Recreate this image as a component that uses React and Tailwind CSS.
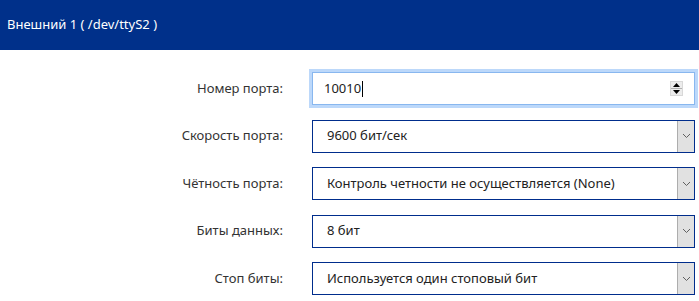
import React from 'react';

const rows = [
  { label: 'Скорость порта:', value: '9600 бит/сек' },
  { label: 'Чётность порта:', value: 'Контроль четности не осуществляется (None)' },
  { label: 'Биты данных:', value: '8 бит' },
  { label: 'Стоп биты:', value: 'Используется один стоповый бит' },
];

function Chevron() {
  return (
    <div className="w-[17px] h-full bg-[#e1e1e1] border-l border-[#adadad] flex items-center justify-center">
      <svg width="9" height="6" viewBox="0 0 9 6">
        <path d="M1 1 L4.5 4.5 L8 1" fill="none" stroke="#606060" strokeWidth="1" />
      </svg>
    </div>
  );
}

function SelectBox({ value }) {
  return (
    <div className="w-[383px] h-[33px] border border-[#002d8c] bg-white flex items-stretch">
      <div className="flex-1 pl-[14px] flex items-center text-[13px] text-[#222]">{value}</div>
      <Chevron />
    </div>
  );
}

function Row({ label, children }) {
  return (
    <div className="flex items-center">
      <div className="w-[283px] text-right text-[13px] text-[#333] pr-0">{label}</div>
      <div className="ml-[29px]">{children}</div>
    </div>
  );
}

export default function App() {
  return (
    <div className="w-[699px] h-[301px] bg-white overflow-hidden" style={{ fontFamily: '"Noto Sans", "Open Sans", sans-serif' }}>
      <div className="h-[50px] bg-[#00308a] flex items-center px-[7px] text-white text-[13px]">
        Внешний 1 ( /dev/ttyS2 )
      </div>

      <div className="pt-[22px] flex flex-col gap-[14.5px]">
        <Row label="Номер порта:">
          <div className="w-[383px] h-[33px] border border-[#88b7ef] bg-white flex items-center outline outline-[3px] outline-[#bcd8fa]">
            <div className="flex-1 pl-[11px] flex items-center text-[13px] text-[#222]">
              10010<span className="w-px h-[16px] bg-black ml-px" />
            </div>
            <div className="mr-[11px] w-[13px] h-[15px] bg-[#ececec] border border-[#d8d8d8] flex flex-col">
              <div className="flex-1 flex items-center justify-center border-b border-[#b0b0b0]">
                <svg width="7" height="4" viewBox="0 0 7 4"><path d="M0 4 L3.5 0 L7 4 Z" fill="#000" /></svg>
              </div>
              <div className="flex-1 flex items-center justify-center">
                <svg width="7" height="4" viewBox="0 0 7 4"><path d="M0 0 L3.5 4 L7 0 Z" fill="#000" /></svg>
              </div>
            </div>
          </div>
        </Row>
        {rows.map((r) => (
          <Row key={r.label} label={r.label}>
            <SelectBox value={r.value} />
          </Row>
        ))}
      </div>
    </div>
  );
}
